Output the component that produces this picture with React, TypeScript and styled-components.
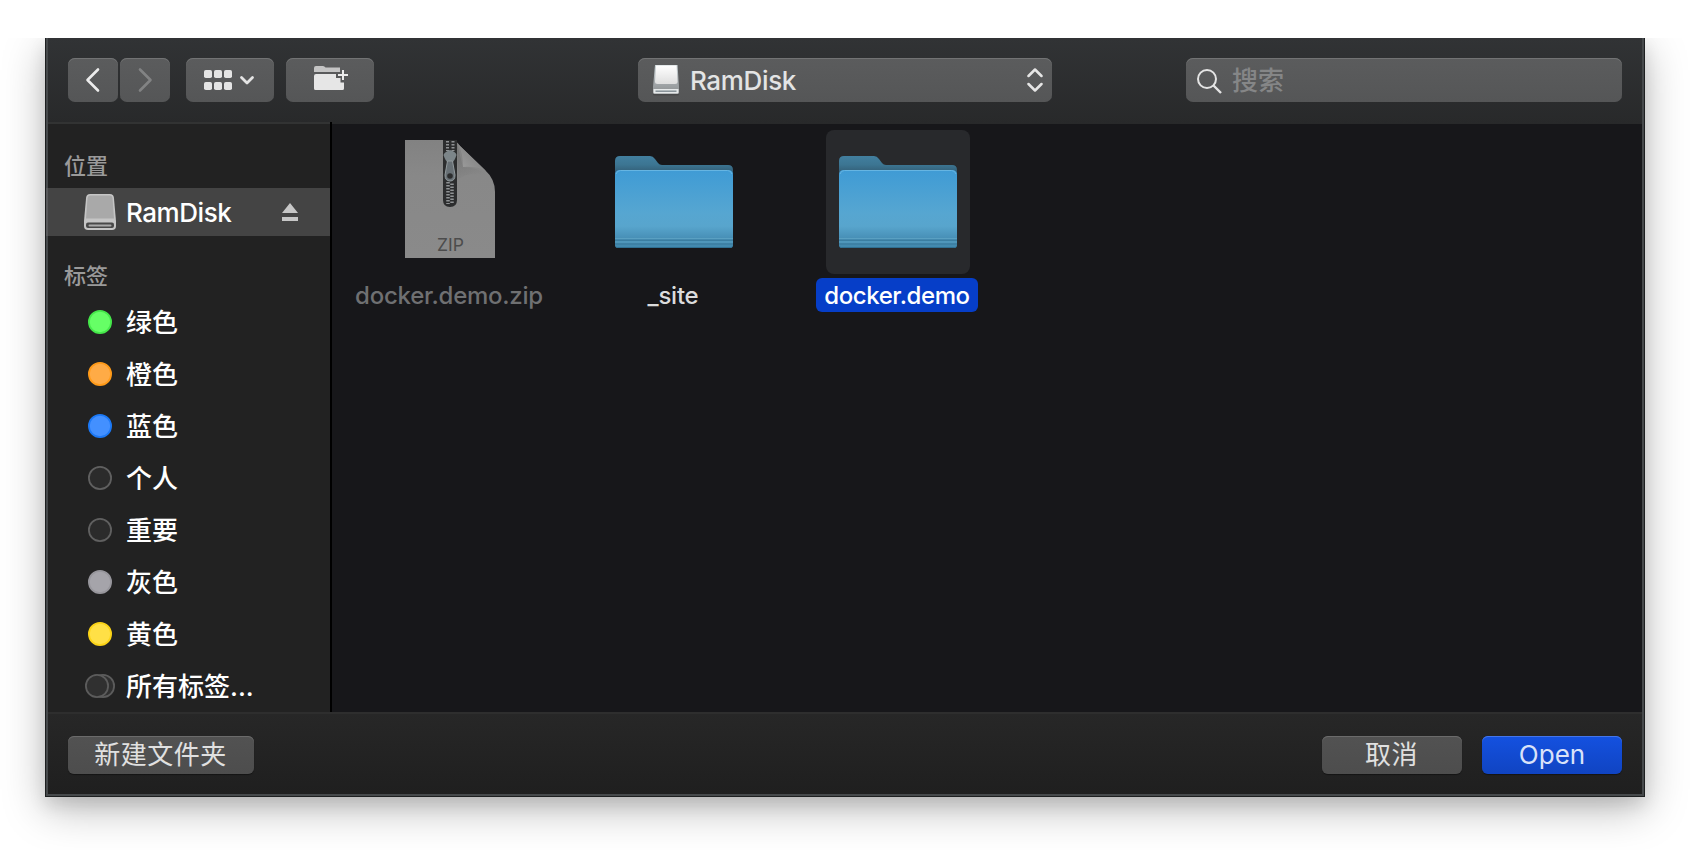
import React from "react";
import styled, { createGlobalStyle, css } from "styled-components";

const Global = createGlobalStyle`
  * { box-sizing: border-box; }
  body {
    margin: 0;
    background: #fff;
    overflow: hidden;
    font-family: Inter, "Noto Sans CJK SC", sans-serif;
  }
`;

const Page = styled.main`
  width: 1690px;
  height: 850px;
  padding: 38px 45px 53px;
  overflow: hidden;
  clip-path: inset(38px 0 0 0);
`;

const Dialog = styled.section`
  height: 759px;
  border: 1px solid #1d1f20;
  border-top: 0;
  background: #46494b;
  box-shadow: 0 12px 40px rgba(0, 0, 0, 0.27), 0 8px 16px rgba(0, 0, 0, 0.1);
  display: flex;
  flex-direction: column;
`;

const Toolbar = styled.header`
  flex: 0 0 86px;
  margin: 0 2px;
  padding: 20px 20px 0;
  display: flex;
  background:
    linear-gradient(#323333, #323333) 0 84px / 282px 2px no-repeat,
    linear-gradient(#000, #000) 282px 84px / 2px 2px no-repeat,
    linear-gradient(#313335, #28292a);
`;

const buttonFace = css`
  background: linear-gradient(#5b5c5d, #555657);
  box-shadow: inset 0 1px 0 #727374;
`;

const ToolButton = styled.button<{ $width: number; $gap: number }>`
  ${buttonFace}
  width: ${(p) => p.$width}px;
  height: 44px;
  margin: 0 ${(p) => p.$gap}px 0 0;
  padding: 0;
  border: 0;
  border-radius: 7px;
  svg { display: block; }
`;

const Location = styled.button`
  ${buttonFace}
  width: 414px;
  height: 44px;
  margin: 0 134px 0 264px;
  padding: 0 9.5px 0 13px;
  border: 0;
  border-radius: 7px;
  display: flex;
  align-items: center;
  font: 450 26px/44px Inter, sans-serif;
  letter-spacing: -0.35px;
  color: #e3e4e4;
  span { flex: 1; text-align: left; margin-left: 9px; padding-top: 2px; line-height: 42px; }
`;

const Search = styled.label`
  ${buttonFace}
  width: 436px;
  height: 44px;
  border-radius: 7px;
  display: flex;
  align-items: center;
  padding-left: 10px;
  gap: 8px;
  font-size: 26px;
  line-height: 40px;
  font-weight: 500;
  color: #858687;
  span { padding-top: 2px; }
`;

const Body = styled.div`
  flex: 0 0 588px;
  display: flex;
  margin: 0 2px;
`;

const Sidebar = styled.nav`
  flex: 0 0 284px;
  background: #222;
  border-right: 2px solid #000;
`;

const Heading = styled.h2<{ $first?: boolean }>`
  margin: 0;
  height: ${(p) => (p.$first ? 64 : 60)}px;
  padding: ${(p) => (p.$first ? 25 : 23)}px 0 0 16px;
  font-size: 22px;
  line-height: 34px;
  font-weight: 500;
  color: #9a9a9a;
`;

const Place = styled.div`
  height: 48px;
  margin-left: -2px;
  padding: 0 31px 0 38px;
  display: flex;
  align-items: center;
  background: linear-gradient(90deg, #58595b 2px, #444 2px);
  color: #fff;
  font-size: 26px;
  font-weight: 500;
  letter-spacing: -0.45px;
  span { flex: 1; margin-left: 10px; }
`;

const Tag = styled.div`
  height: 52px;
  padding-left: 36px;
  display: flex;
  align-items: center;
  color: #fff;
  font-size: 26px;
  line-height: 38px;
  font-weight: 500;
  svg { margin-right: 10px; }
  span { padding-top: 2px; }
`;

const Files = styled.div`
  flex: 1;
  background: #17171a;
  padding: 6px;
  display: flex;
`;

const File = styled.div`
  width: 224px;
  display: flex;
  flex-direction: column;
  align-items: center;
`;

const Thumb = styled.div<{ $selected?: boolean }>`
  width: 144px;
  height: 144px;
  border-radius: 8px;
  background: ${(p) => (p.$selected ? "#28292c" : "transparent")};
  svg { display: block; }
`;

const FileName = styled.div<{ $tone: "dim" | "plain" | "selected" }>`
  height: 34px;
  margin: 4px 2px 0 0;
  padding: 1px 8px 0;
  border-radius: 6px;
  font-size: 24px;
  line-height: 34px;
  letter-spacing: ${(p) => (p.$tone === "selected" ? -0.42 : -0.25)}px;
  font-weight: ${(p) => (p.$tone === "selected" ? 500 : 450)};
  background: ${(p) => (p.$tone === "selected" ? "#063ec8" : "transparent")};
  color: ${(p) => ({ dim: "#6f7072", plain: "#dcdcdd", selected: "#fff" })[p.$tone]};
`;

const Footer = styled.footer`
  flex: 0 0 82px;
  margin: 0 2px;
  padding: 22px 20px 0;
  display: flex;
  gap: 20px;
  border-top: 2px solid #2e2e2e;
  background: linear-gradient(#272727, #1f1f1f);
`;

const Action = styled.button<{ $width: number; $primary?: boolean }>`
  width: ${(p) => p.$width}px;
  height: 38px;
  padding: 0 ${(p) => (p.$primary ? 0 : 1)}px 0 0;
  border: 0;
  border-radius: 6px;
  font-family: Inter, "Noto Sans CJK SC", sans-serif;
  font-size: 26px;
  line-height: 36px;
  letter-spacing: ${(p) => (p.$primary ? 0 : 0.5)}px;
  color: ${(p) => (p.$primary ? "#d9e2f9" : "#e0e0e0")};
  background: ${(p) =>
    p.$primary ? "linear-gradient(#1451e0, #1044c2)" : "linear-gradient(#525252, #4d4d4d)"};
  box-shadow: inset 0 1px 0 ${(p) => (p.$primary ? "#4476ea" : "#6b6b6b")}, 0 1px 1px rgba(0, 0, 0, 0.4);
`;

const Spacer = styled.div`
  flex: 1;
`;

const Chevron = ({ forward }: { forward?: boolean }) => (
  <svg width="50" height="44" fill="none" stroke={forward ? "#828384" : "#ececec"} strokeWidth="2.6" strokeLinecap="round" strokeLinejoin="round">
    <path d={forward ? "M20 11.5 30.5 22 20 32.5" : "M30 11.5 19.5 22 30 32.5"} />
  </svg>
);

const GridGlyph = () => (
  <svg width="88" height="44" fill="#e4e4e4">
    {[12, 24].map((y) => [18, 28, 38].map((x) => <rect key={`${x}-${y}`} x={x} y={y} width="8" height="8" rx="1.8" />))}
    <path d="M55.500 19.500 61 25 66.500 19.500" fill="none" stroke="#e4e4e4" strokeWidth="2.8" strokeLinecap="round" strokeLinejoin="round" />
  </svg>
);

const NewFolderGlyph = () => (
  <svg width="88" height="44">
    <path d="M28 14V10q0-2 2-2h7q1.500 0 2.500 1.500H54V14Z" fill="#c4c4c4" />
    <path d="M28 18q0-2 2-2H50V20H54.500V24.500H58V30.500q0 1.500-1.500 1.500H29.500q-1.500 0-1.500-1.500Z" fill="#e6e6e6" />
    <path d="M57 12V22M52 17H62" stroke="#ececec" strokeWidth="2" />
  </svg>
);

const VolumeIcon = () => (
  <svg width="30" height="36" viewBox="0 0 30 36">
    <defs>
      <linearGradient id="volTop" x2="0" y2="1">
        <stop stopColor="#fff" />
        <stop offset="1" stopColor="#dedede" />
      </linearGradient>
      <linearGradient id="volSide" x2="0" y2="1">
        <stop stopColor="#c9d3d6" />
        <stop offset="1" stopColor="#8b8d8f" />
      </linearGradient>
    </defs>
    <rect x="2" y="31" width="26" height="2.500" rx="1.200" fill="#3f4041" opacity=".6" />
    <path d="M4 3H26.500L28 25V30.500q0 1.500-1.500 1.500H3.500q-1.500 0-1.500-1.500V25Z" fill="url(#volSide)" />
    <path d="M5 3.500H25.500L26.500 19.500q0 2.500-2.500 2.500H6.500q-2.500 0-2.500-2.500Z" fill="url(#volTop)" />
    <path d="M2.500 27H27.500V30.500q0 1-1 1H3.500q-1 0-1-1Z" fill="#e6e9ea" />
    <path d="M4.500 29.200H25.500" stroke="#7f8b91" strokeWidth="1.400" />
  </svg>
);

const UpDown = () => (
  <svg width="16" height="24" viewBox="0 0 16 24" fill="none" stroke="#e6e6e6" strokeWidth="2.500" strokeLinecap="round" strokeLinejoin="round">
    <path d="M1.500 8 8 1.500 14.500 8M1.500 16 8 22.500 14.500 16" />
  </svg>
);

const SearchGlyph = () => (
  <svg width="28" height="28" viewBox="0 0 28 28" fill="none" stroke="#e4e4e4" strokeWidth="2">
    <circle cx="11" cy="13" r="9" />
    <path d="M17.500 19.500 25 27" strokeWidth="2.400" />
  </svg>
);

const DriveIcon = () => (
  <svg width="32" height="36" viewBox="0 0 32 36">
    <path d="M6 0H26q3.500 0 3.900 3.500L32 27v5q0 4-4 4H4q-4 0-4-4V27L2.100 3.500Q2.500 0 6 0Z" fill="#c5c5c5" />
    <path d="M6 1.500H26q2.200 0 2.500 2.500L30 24.500H2L3.500 4Q3.800 1.500 6 1.500Z" fill="#a9a9a9" />
    <rect x="2" y="28.500" width="28" height="5.500" rx="2" fill="#484848" />
    <rect x="4.500" y="30.500" width="23" height="2" rx="1" fill="#a9a9a9" />
  </svg>
);

const Eject = () => (
  <svg width="18" height="18" viewBox="0 0 18 18" fill="#c7c7c7">
    <path d="M9 0 17 10H1ZM1 14H17V18H1Z" />
  </svg>
);

const Dot = ({ fill, ring, double }: { fill: string; ring: string; double?: boolean }) => (
  <svg width="32" height="26" viewBox="0 0 32 26" fill={fill} stroke={ring} strokeWidth="1.800">
    {double ? (
      <>
        <circle cx="19" cy="13" r="11.100" />
        <circle cx="13" cy="13" r="11.100" />
      </>
    ) : (
      <circle cx="16" cy="13" r="11.100" />
    )}
  </svg>
);

const ZipIcon = () => (
  <svg width="144" height="144">
    <defs>
      <linearGradient id="curl" x1="0" y1="1" x2=".7" y2=".4">
        <stop stopColor="#a0a0a0" />
        <stop offset="1" stopColor="#848484" />
      </linearGradient>
      <linearGradient id="paper" x2="0" y2="1">
        <stop stopColor="#828282" />
        <stop offset=".3" stopColor="#888" />
        <stop offset="1" stopColor="#8a8a8a" />
      </linearGradient>
      <linearGradient id="curlShade" x1="0" y1="0" x2=".4" y2="1">
        <stop stopColor="#6c6c6c" />
        <stop offset="1" stopColor="#6c6c6c" stopOpacity="0" />
      </linearGradient>
    </defs>
    <path d="M27 10H74Q79 11 82 16L107 40Q117 49 117 62V128H27Z" fill="url(#paper)" />
    <path d="M79 13.500 85 37Q99 37 112 46Q90 40 80 50Z" fill="url(#curlShade)" opacity=".7" />
    <path d="M80 14Q85 22 85 37Q99 36 108 41Z" fill="url(#curl)" />
    <path d="M65 10H79V70q0 7-7 7t-7-7Z" fill="#2c2d2e" />
    <path d="M69.500 11V21M75 11V21" stroke="#8f9294" strokeWidth="3" strokeDasharray="1.500 1.500" />
    <path d="M70 52V74M74 53.500V74" stroke="#909395" strokeWidth="3.500" strokeDasharray="1.500 1.500" />
    <path d="M72 20q6 2 6.500 5-2 6-4 7h-5q-2-1-4-7 1-3 6.500-5Z" fill="#7c8589" />
    <path d="M69.500 31h5l2.500 14q0 6-5 6t-5-6Z" fill="#687075" stroke="#929a9d" strokeWidth="1" />
    <circle cx="72" cy="46" r="2.800" fill="#2c2d2e" />
    <text x="72.500" y="121" textAnchor="middle" fontFamily="Inter, sans-serif" fontSize="17.500" fill="#4c4c4c">ZIP</text>
  </svg>
);

const FolderIcon = () => (
  <svg width="144" height="144">
    <defs>
      <linearGradient id="folderBack" gradientUnits="userSpaceOnUse" x1="0" y1="26" x2="0" y2="42">
        <stop stopColor="#427f9f" />
        <stop offset=".55" stopColor="#3c7592" />
        <stop offset="1" stopColor="#335f78" />
      </linearGradient>
      <linearGradient id="folderFront" x2="0" y2="1">
        <stop stopColor="#3f9bd5" />
        <stop offset=".55" stopColor="#56a6d1" />
        <stop offset=".72" stopColor="#58a5cd" />
        <stop offset=".87" stopColor="#4890b7" />
        <stop offset="1" stopColor="#4188ad" />
      </linearGradient>
    </defs>
    <path d="M13 48V31q0-5 5-5H48q3 0 5 3l3 4q1.500 2 4 2H126q5 0 5 5V60H13Z" fill="url(#folderBack)" />
    <path d="M13 45q0-5 5-5H126q5 0 5 5V115q0 3-3 3H16q-3 0-3-3Z" fill="url(#folderFront)" />
    <path d="M14 44q1-3.500 4.500-3.500H125.500q3.500 0 4.500 3.500" fill="none" stroke="#66b5e2" strokeWidth="1" />
    <path d="M13 108.500H131M13 112H131" stroke="#5aa0c2" strokeWidth="1" />
    <path d="M13 110.300H131M13 114H131" stroke="#38799a" strokeWidth="1.100" />
    <path d="M13.500 116.500q.5 1 2 1H128.500q1.500 0 2-1" fill="none" stroke="#306f91" strokeWidth="1" />
  </svg>
);

const tags = [
  { name: "绿色", fill: "#66ff66", ring: "#45e84a" },
  { name: "橙色", fill: "#ffab46", ring: "#ff9a18" },
  { name: "蓝色", fill: "#4390ff", ring: "#1b78f5" },
  { name: "个人", fill: "#2b2b2b", ring: "#606060" },
  { name: "重要", fill: "#2b2b2b", ring: "#606060" },
  { name: "灰色", fill: "#a5a4aa", ring: "#97969c" },
  { name: "黄色", fill: "#ffe046", ring: "#fbd316" },
  { name: "所有标签...", fill: "#303030", ring: "#5c5c5c", double: true },
];

export default function App() {
  return (
    <>
      <Global />
      <Page>
        <Dialog>
          <Toolbar>
            <ToolButton $width={50} $gap={2}><Chevron /></ToolButton>
            <ToolButton $width={50} $gap={16}><Chevron forward /></ToolButton>
            <ToolButton $width={88} $gap={12}><GridGlyph /></ToolButton>
            <ToolButton $width={88} $gap={0}><NewFolderGlyph /></ToolButton>
            <Location>
              <VolumeIcon />
              <span>RamDisk</span>
              <UpDown />
            </Location>
            <Search>
              <SearchGlyph />
              <span>搜索</span>
            </Search>
          </Toolbar>
          <Body>
            <Sidebar>
              <Heading $first>位置</Heading>
              <Place>
                <DriveIcon />
                <span>RamDisk</span>
                <Eject />
              </Place>
              <Heading>标签</Heading>
              {tags.map(({ name, ...dot }) => (
                <Tag key={name}>
                  <Dot {...dot} />
                  <span>{name}</span>
                </Tag>
              ))}
            </Sidebar>
            <Files>
              <File>
                <Thumb><ZipIcon /></Thumb>
                <FileName $tone="dim">docker.demo.zip</FileName>
              </File>
              <File>
                <Thumb><FolderIcon /></Thumb>
                <FileName $tone="plain">_site</FileName>
              </File>
              <File>
                <Thumb $selected><FolderIcon /></Thumb>
                <FileName $tone="selected">docker.demo</FileName>
              </File>
            </Files>
          </Body>
          <Footer>
            <Action $width={186}>新建文件夹</Action>
            <Spacer />
            <Action $width={140}>取消</Action>
            <Action $width={140} $primary>Open</Action>
          </Footer>
        </Dialog>
      </Page>
    </>
  );
}
